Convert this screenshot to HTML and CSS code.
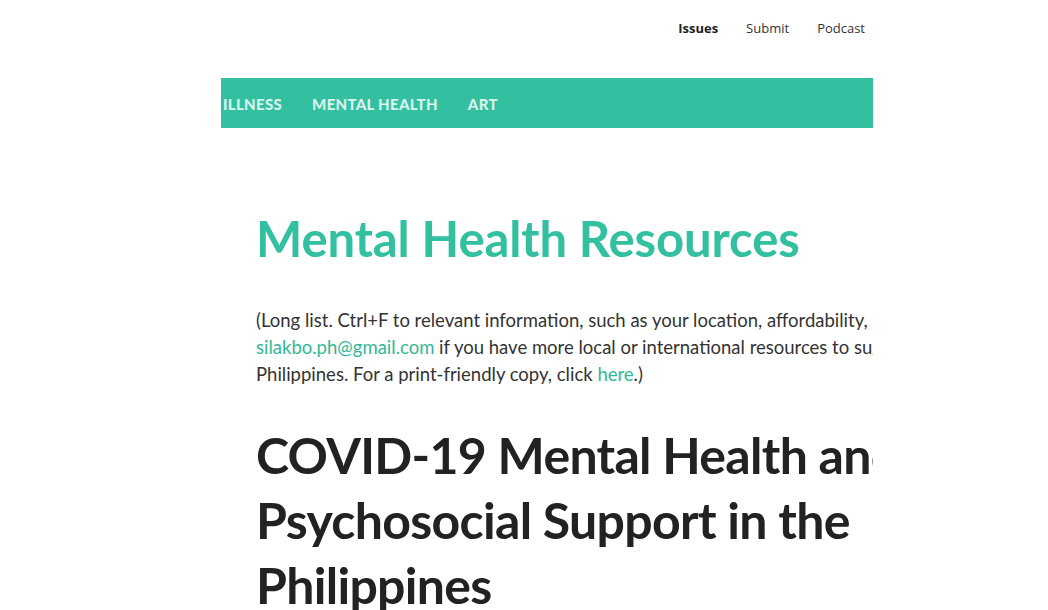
FILE: index.html
```html
<!DOCTYPE html>
<html>
<head>
<meta charset="utf-8">
<link rel="stylesheet" href="styles.css">
</head>
<body>
<div class="page">
  <header class="top">
    <nav class="toplinks">
      <a class="toplink current">Issues</a>
      <a class="toplink">Submit</a>
      <a class="toplink">Podcast</a>
    </nav>
  </header>
  <div class="catbar">
    <div class="cats">
      <a class="cat">ILLNESS</a>
      <a class="cat">MENTAL HEALTH</a>
      <a class="cat">ART</a>
    </div>
  </div>
  <main class="content">
    <h1 class="title">Mental Health Resources</h1>
    <p class="intro">(Long list. Ctrl+F to relevant information, such as your location, affordability, etc. Email <a class="link">silakbo.ph@gmail.com</a> if you have more local or international resources to suggest, especially in the Philippines. For a print-friendly copy, click <a class="link">here</a>.)</p>
    <h2 class="section">COVID-19 Mental Health and Psychosocial Support in the Philippines</h2>
  </main>
</div>
</body>
</html>
```
FILE: styles.css
```css
html, body {
  margin: 0;
  padding: 0;
  background: #fff;
  overflow: hidden;
}
.page {
  width: 652px;
  margin-left: 221px;
  height: 610px;
  overflow: hidden;
}
.top {
  height: 78px;
  display: flex;
  justify-content: flex-end;
  padding-right: 8px;
}
.toplinks {
  display: flex;
  gap: 28px;
  padding-top: 19px;
  font-family: "Open Sans", sans-serif;
  font-size: 13px;
  color: #333;
}
.toplink.current {
  font-weight: 700;
  color: #222;
}
.catbar {
  background: #33c0a1;
  height: 50px;
  display: flex;
  align-items: center;
  overflow: hidden;
}
.cats {
  display: flex;
  gap: 30px;
  padding-left: 2px;
  padding-top: 2px;
  font-family: Lato, sans-serif;
  font-weight: 900;
  font-size: 15px;
  letter-spacing: 0.3px;
  color: #d8f4ec;
  white-space: nowrap;
}
.content {
  padding: 80px 0 0 35px;
  font-family: Lato, sans-serif;
  white-space: nowrap;
}
.title {
  margin: 0;
  font-size: 49px;
  line-height: 60px;
  font-weight: 700;
  color: #33c0a1;
  letter-spacing: -0.1px;
}
.intro {
  margin: 39px 0 0;
  font-size: 18.5px;
  line-height: 27px;
  color: #333;
  white-space: normal;
  width: 800px;
}
.link {
  color: #33b896;
}
.section {
  margin: 35px 0 0;
  font-size: 50px;
  line-height: 65px;
  font-weight: 700;
  color: #222;
  white-space: normal;
  width: 720px;
  letter-spacing: -0.7px;
}
```
